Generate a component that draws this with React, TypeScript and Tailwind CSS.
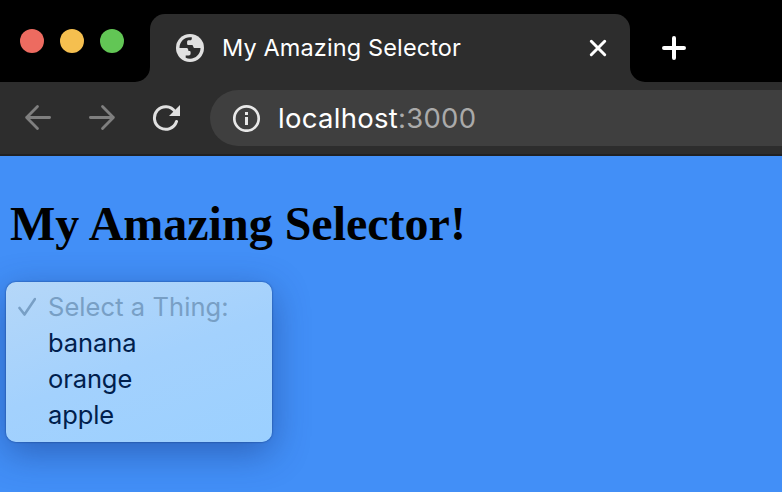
import React from 'react';

const ui = 'font-[Inter,"Liberation_Sans",sans-serif]';

function Globe() {
  return (
    <svg className="block h-7 w-7" viewBox="0 0 28 28">
      <circle cx="14" cy="14" r="14" fill="#e0e0e0" />
      <path
        d="M3.500 14C3.500 8 8.200 3.300 14 3.300h1.800v1.400c0 .9-.6 1.500-1.500 1.500h-1.500c-1.100 0-1.700.7-1.700 1.700v1.800c0 .8.6 1.300 1.400 1.300h3.100c1 0 1.600.6 1.600 1.500 0 .9.700 1.500 1.600 1.500h5.700C24.500 20 19.800 24.700 14 24.700c-1.500 0-3-.3-4.300-.9v-2.300h3c1.200 0 1.900-.7 1.900-1.900v-1.300c0-.7-.5-1.200-1.200-1.200-.8 0-1.200-.5-1.200-1.200 0-1.300-.8-1.900-2-1.900Z"
        fill="#2d2d2d"
      />
    </svg>
  );
}

function Arrow({ flipped = false }: { flipped?: boolean }) {
  return (
    <svg className={flipped ? 'block h-7 w-7 -scale-x-100' : 'block h-7 w-7'} viewBox="0 0 28 28" fill="none" stroke="#7f7f7f" strokeWidth="2.800" strokeLinecap="round" strokeLinejoin="round">
      <path d="M25.600 13.500H2.600M13.500 2.500L2.600 13.500l10.900 11" />
    </svg>
  );
}

const choices = ['banana', 'orange', 'apple'];

export default function App() {
  return (
    <div className={`h-[492px] w-[782px] overflow-hidden bg-[#428ff7] ${ui}`}>
      <header className="h-[156px] border-b-2 border-[#202123] bg-[#2d2d2d]">
        <div className="flex h-[82px] bg-[#2d2d2d]">
          <div className="flex w-[150px] gap-4 rounded-br-[15px] bg-black pt-[29px] pl-5">
            <span className="h-6 w-6 rounded-full bg-[#ed6b60]" />
            <span className="h-6 w-6 rounded-full bg-[#f5bf4f]" />
            <span className="h-6 w-6 rounded-full bg-[#62c655]" />
          </div>
          <div className="w-[480px] bg-black pt-[14px]">
            <div className="flex h-[68px] items-center rounded-t-[15px] bg-[#2d2d2d] pl-[26px]">
              <Globe />
              <span className="ml-[18px] w-[367px] text-[23.500px] leading-[28px] tracking-[0.120px] whitespace-nowrap text-white">My Amazing Selector</span>
              <svg className="block h-[18px] w-[18px] shrink-0" viewBox="0 0 18 18" fill="none" stroke="#fff" strokeWidth="3" strokeLinecap="round">
                <path d="M2.300 2.300l13.400 13.400M15.700 2.300l-13.400 13.400" />
              </svg>
            </div>
          </div>
          <div className="flex-1 rounded-bl-[15px] bg-black pt-9 pl-8">
            <svg className="block h-6 w-6" viewBox="0 0 24 24" fill="none" stroke="#fff" strokeWidth="4" strokeLinecap="round">
              <path d="M12 2v20M2 12h20" />
            </svg>
          </div>
        </div>
        <div className="flex h-[72px] items-center pl-6">
          <Arrow />
          <span className="ml-9"><Arrow flipped /></span>
          <svg className="ml-9 block h-7 w-7" viewBox="0 0 28 28">
            <path d="M24.500 17.500A11.300 11.300 0 1 1 23 7.500" fill="none" stroke="#e0e0e0" strokeWidth="3" strokeLinecap="round" />
            <path d="M28 1v11H17Z" fill="#e0e0e0" />
          </svg>
          <div className="ml-[30px] flex h-14 flex-1 items-center rounded-l-full bg-[#3f3f3f] pl-[23px]">
            <svg className="block h-7 w-7" viewBox="0 0 28 28" fill="none" stroke="#e8e8e8" strokeWidth="2.700">
              <circle cx="13.500" cy="14.500" r="12.200" />
              <path d="M13.500 13v8M13.500 8v3" strokeWidth="3" />
            </svg>
            <span className="ml-[17px] text-[27.500px] leading-8 tracking-[0.280px] text-white">localhost<span className="text-[#aaa]">:3000</span></span>
          </div>
        </div>
      </header>
      <main>
        <h1 className='pt-[40px] pl-[10px] font-["Liberation_Serif",serif] text-[48px] leading-[56px] font-bold text-black'>My Amazing Selector!</h1>
        <ul className="mt-[30px] ml-[6px] h-[160px] w-[266px] rounded-[10px] bg-linear-160 from-[#b5d7f8] via-[#a3d1fd] to-[#9bd0ff] pt-[7px] text-[25.500px] leading-9 tracking-[-0.100px] text-[#00204d] shadow-[0_0_2px_0px_rgba(0,30,90,0.7),0_10px_36px_rgba(20,45,110,0.45)]">
          <li className="flex h-9 items-center tracking-[0.070px] text-[#789fc5]">
            <svg className="mr-3 ml-3 block h-5 w-[18px]" viewBox="0 0 18 20" fill="none" stroke="currentColor" strokeWidth="2.600" strokeLinecap="round" strokeLinejoin="round">
              <path d="M1.500 11l5 6.500L17 2" />
            </svg>
            Select a Thing:
          </li>
          {choices.map((choice) => <li key={choice} className="h-9 pl-[42px]">{choice}</li>)}
        </ul>
      </main>
    </div>
  );
}
